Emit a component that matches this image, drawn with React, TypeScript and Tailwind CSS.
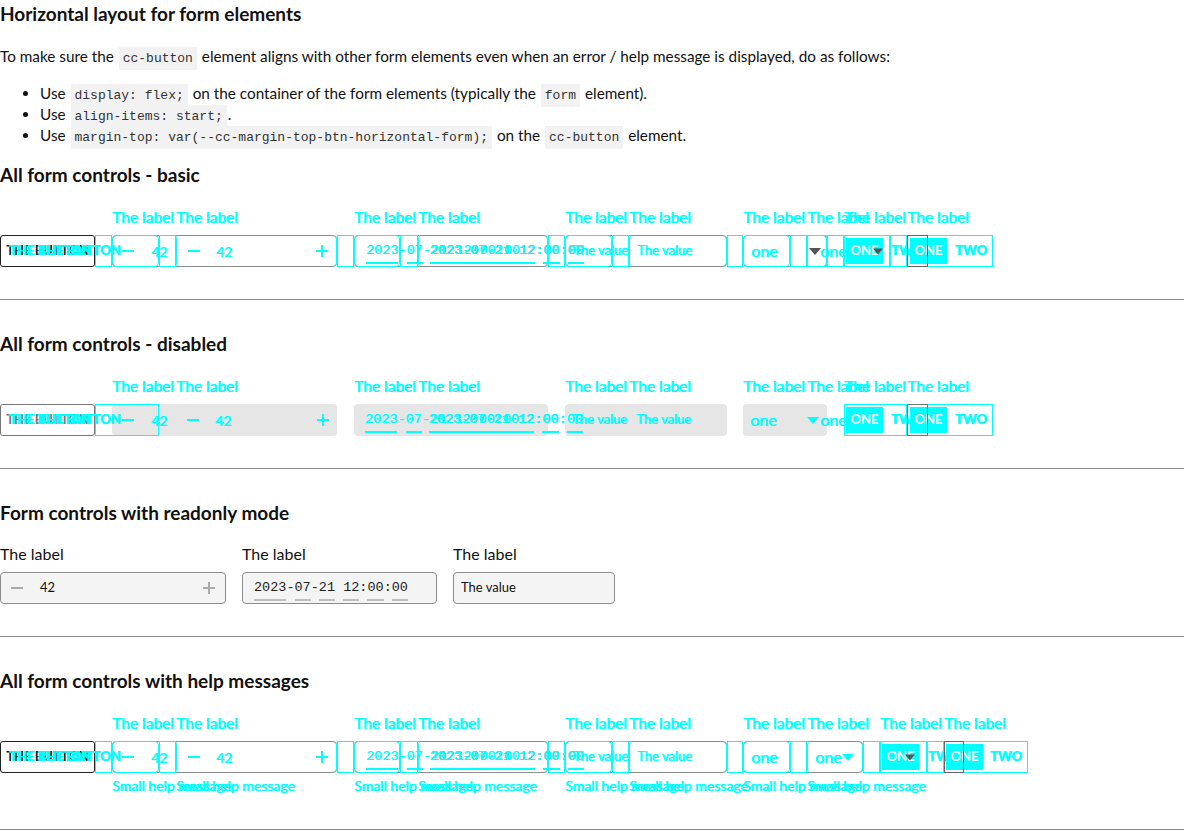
import type { ReactNode } from 'react';
import clsx from 'clsx';

const cyText = 'text-[#00ffff] [text-shadow:0.7px_0_0_#00ffff]';

function B({ className, children }: { className?: string; children?: ReactNode }) {
    return (
        <div className={clsx('h-[32px] shrink-0 flex items-center whitespace-nowrap', className)}>
            {children}
        </div>
    );
}

function Minus({ className }: { className?: string }) {
    return (
        <svg width="12" height="12" viewBox="0 0 12 12" className={clsx('shrink-0', className)}>
            <path d="M0 6h12" stroke="currentColor" strokeWidth="2" />
        </svg>
    );
}

function Plus({ className }: { className?: string }) {
    return (
        <svg width="12" height="12" viewBox="0 0 12 12" className={clsx('shrink-0', className)}>
            <path d="M6 0v12M0 6h12" stroke="currentColor" strokeWidth="2" />
        </svg>
    );
}

function Caret({ className }: { className?: string }) {
    return (
        <svg width="12" height="7" viewBox="0 0 12 7" className={clsx('shrink-0', className)}>
            <path d="M0 0h12L6 7z" fill="currentColor" />
        </svg>
    );
}

function DateText({ text, line }: { text: string; line: string }) {
    const segs = ['2023', '-', '07', '-', '21', ' ', '12', ':', '00', ':', '00'];
    return (
        <span className={clsx("font-['Liberation_Mono',monospace] text-[13.5px] whitespace-pre flex", text)}>
            {segs.map((s, i) =>
                i % 2 === 0 ? (
                    <span key={i} className={clsx('border-b-2 pb-[1px] mt-[3px]', line)}>
                        {s}
                    </span>
                ) : (
                    <span key={i} className="mt-[3px]">{s}</span>
                ),
            )}
        </span>
    );
}

function CyDate() {
    return <DateText text="text-[#00ffff] [text-shadow:0.5px_0_0_#00ffff]" line="border-[#00ffff]" />;
}

function Lbl({ className }: { className: string }) {
    return <div className={clsx('shrink-0 whitespace-nowrap', className)}>The label</div>;
}

function Help({ className }: { className: string }) {
    return <div className={clsx('shrink-0 whitespace-nowrap', className)}>Small help message</div>;
}

function Fill() {
    return (
        <div className="w-[37px] h-[26px] shrink-0 bg-[#00ffff] text-white font-bold text-[13px] flex items-center justify-center">
            ONE
        </div>
    );
}

function BtnText() {
    return (
        <div className={clsx('grid text-[13px] font-bold', cyText)}>
            <span className="col-start-1 row-start-1 ml-[9px]">THE BUTTON</span>
            <span className="col-start-1 row-start-1 ml-[38px]">THE BUTTON</span>
        </div>
    );
}

const cyBox = 'border border-[#00ffff]';
const cyBig = 'border-x border-[#00ffff] rounded-[4px]';
const grayBox = 'border border-[#8c8c8c] rounded-[4px]';
const fillBox = 'bg-[#e6e6e6] rounded-[4px]';

function CyanCommon({ disabled }: { disabled?: boolean }) {
    return (
        <>
            <B className="w-[95px]">
                <BtnText />
            </B>
            {disabled ? (
                <B className={clsx('w-[64px] pl-[26px]', cyBox, cyText)}>
                    <Minus />
                    <span className="ml-[17px] text-[14px]">42</span>
                </B>
            ) : (
                <>
                    <B className={clsx('w-[17px]', cyBox)} />
                    <B className={clsx('w-[47px] rounded-[4px] pl-[9px]', cyBox, cyText)}>
                        <Minus />
                        <span className="ml-[17px] text-[14px]">42</span>
                    </B>
                </>
            )}
            <B className={clsx('w-[17px]', !disabled && cyBox)} />
            <B className={clsx('w-[161px] pl-[11px] pr-[8px]', !disabled && cyBig, cyText)}>
                <Minus />
                <span className="ml-[16px] text-[14px]">42</span>
                <Plus className="ml-auto" />
            </B>
            <B className={clsx('w-[17px]', !disabled && cyBox)} />
            <B className={clsx('w-[46px] pl-[11px]', !disabled && cyBox, !disabled && 'rounded-[4px]')}>
                <CyDate />
            </B>
            <B className={clsx('w-[18px]', !disabled && cyBox)} />
            <B className={clsx('w-[130px] pl-[11px]', !disabled && cyBig)}>
                <CyDate />
            </B>
            <B className={clsx('w-[17px]', !disabled && cyBox)} />
            <B className={clsx('w-[47px] pl-[7px] text-[13px]', !disabled && cyBox, !disabled && 'rounded-[4px]', cyText)}>
                The value
            </B>
            <B className={clsx('w-[17px]', !disabled && cyBox)} />
            <B className={clsx('w-[98px] pl-[7px] text-[13px]', !disabled && cyBig, cyText)}>The value</B>
            <B className={clsx('w-[16px]', !disabled && cyBox)} />
            <B className={clsx('w-[47px] pl-[7px] text-[16px]', !disabled && cyBox, !disabled && 'rounded-[4px]', cyText)}>
                one
            </B>
        </>
    );
}

function ControlsBasic() {
    return (
        <div className="grid h-[32px]">
            {/* original layer */}
            <div className="col-start-1 row-start-1 flex">
                <B className="w-[95px] border border-[#222] rounded-[3px] justify-center text-[13px] font-bold text-[#222]">
                    THE BUTTON
                </B>
                <B className="w-[17px]" />
                <B className={clsx('w-[225px]', grayBox)} />
                <B className="w-[17px]" />
                <B className={clsx('w-[194px] pl-[75px]', grayBox)}>
                    <DateText text="text-[#222]" line="border-[#bdbdbd]" />
                </B>
                <B className="w-[17px]" />
                <B className={clsx('w-[162px]', grayBox)} />
                <B className="w-[16px]" />
                <B className={clsx('w-[84px] pl-[65px] text-[#555]', grayBox)}>
                    <Caret />
                </B>
            </div>
            {/* diff layer */}
            <div className="col-start-1 row-start-1 flex">
                <CyanCommon />
                <B className={clsx('w-[17px]', cyBox)} />
                <B className={clsx('w-[20px] pl-[12px] text-[16px]', cyBox, cyText)}>one</B>
                <B className={clsx('w-[17px]', cyBox)} />
                <B className={clsx('w-[46px] pl-[1px]', cyBox)}>
                    <Fill />
                </B>
                <B className={clsx('w-[17px] text-[13px] font-bold', cyBox, cyText)}>TWO</B>
                <B className={clsx('w-[86px] pl-[2px] text-[13px] font-bold', cyBox, cyText)}>
                    <Fill />
                    <span className="ml-[8px]">TWO</span>
                </B>
            </div>
            <div className="col-start-1 row-start-1 flex">
                <B className="w-[873px]" />
                <B className="w-[34px] text-[#555]">
                    <Caret className="w-[10px]" />
                </B>
                <B className="w-[21px] border border-[#666]" />
            </div>
        </div>
    );
}

function ControlsDisabled() {
    return (
        <div className="grid h-[32px]">
            <div className="col-start-1 row-start-1 flex">
                <B className="w-[95px] border border-[#777] rounded-[3px] justify-center text-[13px] font-bold text-[#777]">
                    THE BUTTON
                </B>
                <B className="w-[17px]" />
                <B className={clsx('w-[225px]', fillBox)} />
                <B className="w-[17px]" />
                <B className={clsx('w-[194px] pl-[75px]', fillBox)}>
                    <DateText text="text-[#555]" line="border-[#bdbdbd]" />
                </B>
                <B className="w-[17px]" />
                <B className={clsx('w-[162px]', fillBox)} />
                <B className="w-[16px]" />
                <B className={clsx('w-[84px]', fillBox)} />
            </div>
            <div className="col-start-1 row-start-1 flex">
                <CyanCommon disabled />
                <B className="w-[17px]" />
                <B className={clsx('w-[37px] text-[16px]', cyText)}>
                    <Caret className="mr-[1px]" />
                    one
                </B>
                <B className={clsx('w-[63px] pl-[1px] text-[13px] font-bold', cyBox, cyText)}>
                    <Fill />
                    <span className="ml-[8px]">TWO</span>
                </B>
                <B className={clsx('w-[86px] pl-[2px] text-[13px] font-bold', cyBox, cyText)}>
                    <Fill />
                    <span className="ml-[8px]">TWO</span>
                </B>
            </div>
            <div className="col-start-1 row-start-1 flex">
                <B className="w-[907px]" />
                <B className="w-[21px] border border-[#777]" />
            </div>
        </div>
    );
}

function ControlsHelp() {
    return (
        <div className="grid h-[32px]">
            <div className="col-start-1 row-start-1 flex">
                <B className="w-[95px] border border-[#222] rounded-[3px] justify-center text-[13px] font-bold text-[#222]">
                    THE BUTTON
                </B>
                <B className="w-[17px]" />
                <B className={clsx('w-[225px]', grayBox)} />
                <B className="w-[17px]" />
                <B className={clsx('w-[194px] pl-[75px]', grayBox)}>
                    <DateText text="text-[#222]" line="border-[#bdbdbd]" />
                </B>
                <B className="w-[17px]" />
                <B className={clsx('w-[162px]', grayBox)} />
                <B className="w-[16px]" />
                <B className={clsx('w-[120px]', grayBox)} />
            </div>
            <div className="col-start-1 row-start-1 flex">
                <CyanCommon />
                <B className={clsx('w-[17px]', cyBox)} />
                <B className={clsx('w-[56px] pl-[7px] text-[16px]', cyBig, cyText)}>
                    one
                    <Caret className="ml-[1px]" />
                </B>
                <B className={clsx('w-[17px]', cyBox)} />
                <B className={clsx('w-[47px] pl-[1px]', cyBox)}>
                    <Fill />
                </B>
                <B className={clsx('w-[17px] text-[13px] font-bold', cyBox, cyText)}>TWO</B>
                <B className={clsx('w-[84px] pl-[1px] text-[13px] font-bold', cyBox, cyText)}>
                    <Fill />
                    <span className="ml-[7px]">TWO</span>
                </B>
            </div>
            <div className="col-start-1 row-start-1 flex">
                <B className="w-[905px]" />
                <B className="w-[39px] text-[#555]">
                    <Caret className="w-[10px]" />
                </B>
                <B className="w-[20px] border border-[#666]" />
            </div>
        </div>
    );
}

function LabelsA() {
    return (
        <div className={clsx('flex pl-[112px] h-[18px] leading-[18px] text-[15.5px] mt-[21px]', cyText)}>
            <Lbl className="w-[64px]" />
            <Lbl className="w-[178px]" />
            <Lbl className="w-[64px]" />
            <Lbl className="w-[147px]" />
            <Lbl className="w-[64px]" />
            <Lbl className="w-[114px]" />
            <Lbl className="w-[64px]" />
            <Lbl className="w-[37px]" />
            <Lbl className="w-[63px]" />
            <Lbl className="w-[64px]" />
        </div>
    );
}

function LabelsHelp() {
    return (
        <div className={clsx('flex pl-[112px] h-[18px] leading-[18px] text-[15.5px] mt-[21px]', cyText)}>
            <Lbl className="w-[64px]" />
            <Lbl className="w-[178px]" />
            <Lbl className="w-[64px]" />
            <Lbl className="w-[147px]" />
            <Lbl className="w-[64px]" />
            <Lbl className="w-[114px]" />
            <Lbl className="w-[64px]" />
            <Lbl className="w-[73px]" />
            <Lbl className="w-[64px]" />
            <Lbl className="w-[64px]" />
        </div>
    );
}

function Code({ children }: { children: ReactNode }) {
    return (
        <code className="font-['Liberation_Mono',monospace] text-[13px] leading-none bg-[#f2f2f2] text-[#333] px-[4px] py-[4px] mx-[1px]">
            {children}
        </code>
    );
}

function Heading({ children, className }: { children: ReactNode; className?: string }) {
    return <h2 className={clsx('text-[19px] font-bold leading-[24px] h-[24px] text-[#111]', className)}>{children}</h2>;
}

export default function App() {
    return (
        <div className="w-[1184px] h-[831px] overflow-hidden bg-white font-['Lato',sans-serif] text-[#111]">
            <h1 className="text-[19px] font-bold leading-[24px] mt-[2px]">Horizontal layout for form elements</h1>
            <p className="text-[15.3px] leading-[24px] mt-[18px]">
                To make sure the <Code>cc-button</Code> element aligns with other form elements even when an error / help
                message is displayed, do as follows:
            </p>
            <ul className="list-disc pl-[40px] text-[15.3px] leading-[21px] mt-[14.5px]">
                <li>
                    Use <Code>display: flex;</Code> on the container of the form elements (typically the <Code>form</Code>{' '}
                    element).
                </li>
                <li>
                    Use <Code>align-items: start;</Code>.
                </li>
                <li>
                    Use <Code>margin-top: var(--cc-margin-top-btn-horizontal-form);</Code> on the <Code>cc-button</Code>{' '}
                    element.
                </li>
            </ul>

            <Heading className="mt-[17.5px]">All form controls - basic</Heading>
            <LabelsA />
            <div className="mt-[9px]">
                <ControlsBasic />
            </div>
            <hr className="mt-[32px] border-t border-[#8c8c8c]" />

            <Heading className="mt-[32px]">All form controls - disabled</Heading>
            <LabelsA />
            <div className="mt-[9px]">
                <ControlsDisabled />
            </div>
            <hr className="mt-[32px] border-t border-[#8c8c8c]" />

            <Heading className="mt-[32px]">Form controls with readonly mode</Heading>
            <div className="flex mt-[20px] gap-[16px]">
                <div className="w-[226px]">
                    <div className="h-[18px] leading-[18px] text-[16px]">The label</div>
                    <div className="mt-[9px] h-[32px] border border-[#8c8c8c] rounded-[4px] bg-[#f4f4f4] flex items-center pl-[10px] pr-[10px]">
                        <Minus className="text-[#aaa]" />
                        <span className="ml-[17px] text-[13px]">42</span>
                        <Plus className="ml-auto text-[#aaa]" />
                    </div>
                </div>
                <div className="w-[195px]">
                    <div className="h-[18px] leading-[18px] text-[16px]">The label</div>
                    <div className="mt-[9px] h-[32px] border border-[#8c8c8c] rounded-[4px] bg-[#f4f4f4] flex items-center pl-[11px]">
                        <DateText text="text-[#222]" line="border-[#bdbdbd]" />
                    </div>
                </div>
                <div className="w-[162px]">
                    <div className="h-[18px] leading-[18px] text-[16px]">The label</div>
                    <div className="mt-[9px] h-[32px] border border-[#8c8c8c] rounded-[4px] bg-[#f4f4f4] flex items-center pl-[7px] text-[13px]">
                        The value
                    </div>
                </div>
            </div>
            <hr className="mt-[32px] border-t border-[#8c8c8c]" />

            <Heading className="mt-[32px]">All form controls with help messages</Heading>
            <LabelsHelp />
            <div className="mt-[9px]">
                <ControlsHelp />
            </div>
            <div className={clsx('flex pl-[112px] h-[16px] leading-[16px] text-[14px] mt-[5px]', cyText)}>
                <Help className="w-[64px]" />
                <Help className="w-[178px]" />
                <Help className="w-[64px]" />
                <Help className="w-[147px]" />
                <Help className="w-[64px]" />
                <Help className="w-[114px]" />
                <Help className="w-[64px]" />
                <Help className="w-[64px]" />
            </div>
            <hr className="mt-[35px] border-t border-[#8c8c8c]" />
        </div>
    );
}
